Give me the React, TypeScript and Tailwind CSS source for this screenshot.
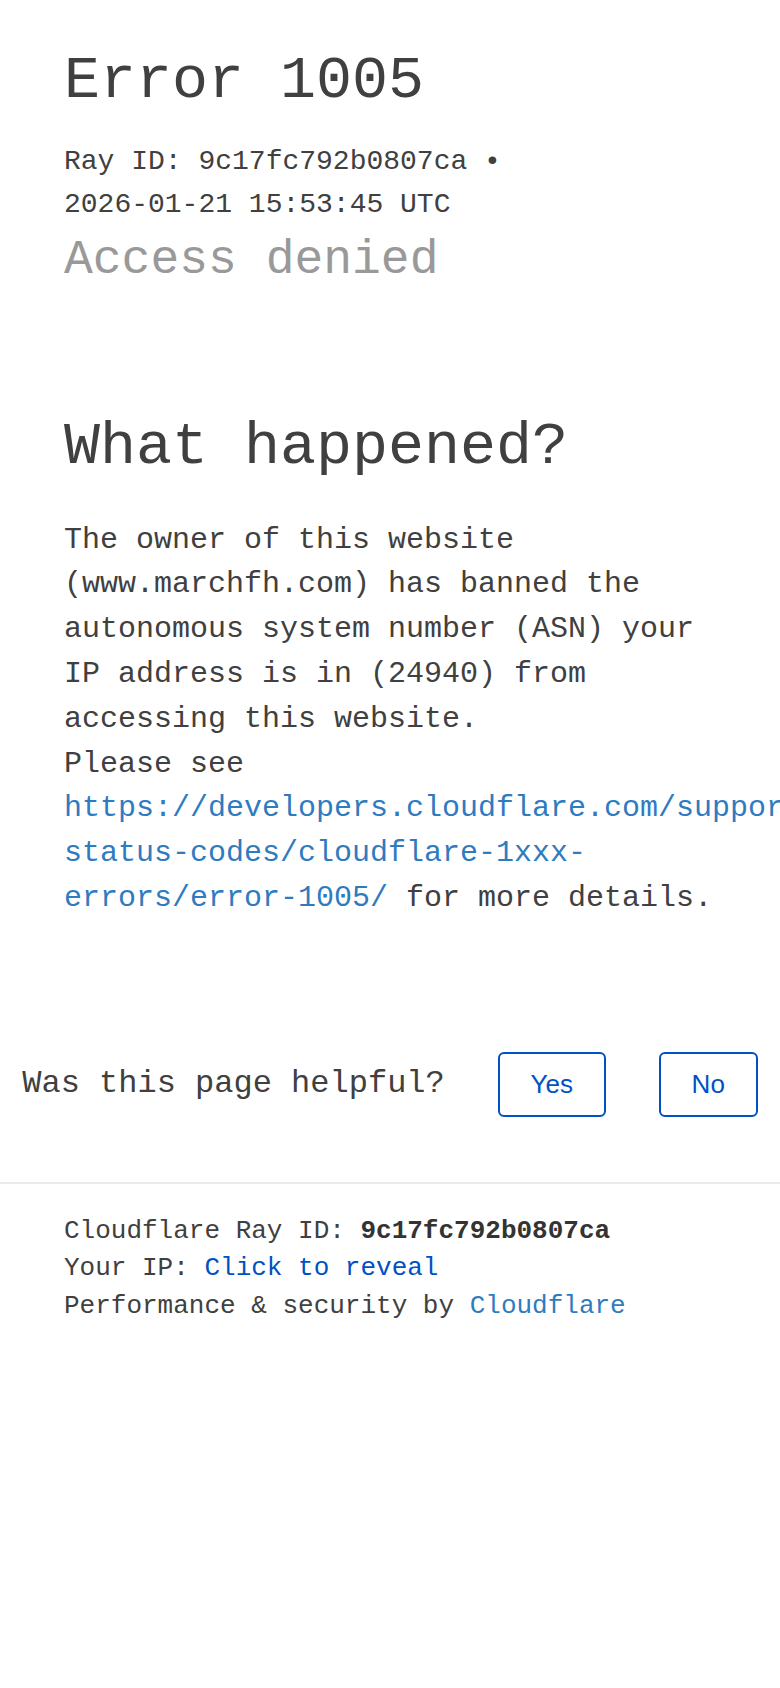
import React from "react";

export default function App() {
  return (
    <div className="min-h-screen w-full overflow-hidden bg-white text-[#404040] font-['Liberation_Mono',monospace]">
      <div className="pl-[64px] pr-[60px]">
        <h1 className="pt-[51px] text-[60px] leading-[60px] font-normal">Error 1005</h1>
        <div className="mt-[29px] text-[28px] leading-[43.3px]">
          <span>Ray ID: 9c17fc792b0807ca</span> <span>&bull;</span>{" "}
          <span className="whitespace-nowrap">2026-01-21 15:53:45 UTC</span>
        </div>
        <h2 className="mt-[9px] text-[48px] leading-[48px] font-normal text-[#999999]">Access denied</h2>

        <h2 className="mt-[133px] text-[60px] leading-[60px] font-normal">What happened?</h2>
        <p className="mt-[41px] text-[30px] leading-[44.8px]">
          The owner of this website (www.marchfh.com) has banned the autonomous system number (ASN) your IP address is in (24940) from accessing this website.
          <br />
          Please see{" "}
          <a className="text-[#2f7bbf]">https://developers.cloudflare.com/support/troubleshooting/http-status-codes/cloudflare-1xxx-errors/error-1005/</a>{" "}
          for more details.
        </p>
      </div>

      <div className="mt-[131px] flex items-center justify-center gap-[53px]">
        <span className="text-[32px] leading-[32px]">Was this page helpful?</span>
        <button className="flex h-[65px] w-[108px] items-center justify-center rounded-[6px] border-2 border-[#0051c3] text-[26px] text-[#0051c3] font-['Liberation_Sans',Arial,sans-serif]">
          Yes
        </button>
        <button className="flex h-[65px] w-[99px] items-center justify-center rounded-[6px] border-2 border-[#0051c3] text-[26px] text-[#0051c3] font-['Liberation_Sans',Arial,sans-serif]">
          No
        </button>
      </div>

      <div className="mt-[65px] h-[2px] w-full bg-[#ebebeb]" />

      <div className="pl-[64px] pr-[60px] pt-[29px] text-[26px] leading-[37.7px]">
        <div>
          Cloudflare Ray ID: <span className="font-bold text-[#333333]">9c17fc792b0807ca</span>
        </div>
        <div>
          Your IP: <button className="text-[#0051c3]">Click to reveal</button>
        </div>
        <div>
          Performance &amp; security by <a className="text-[#2f7bbf]">Cloudflare</a>
        </div>
      </div>
    </div>
  );
}
